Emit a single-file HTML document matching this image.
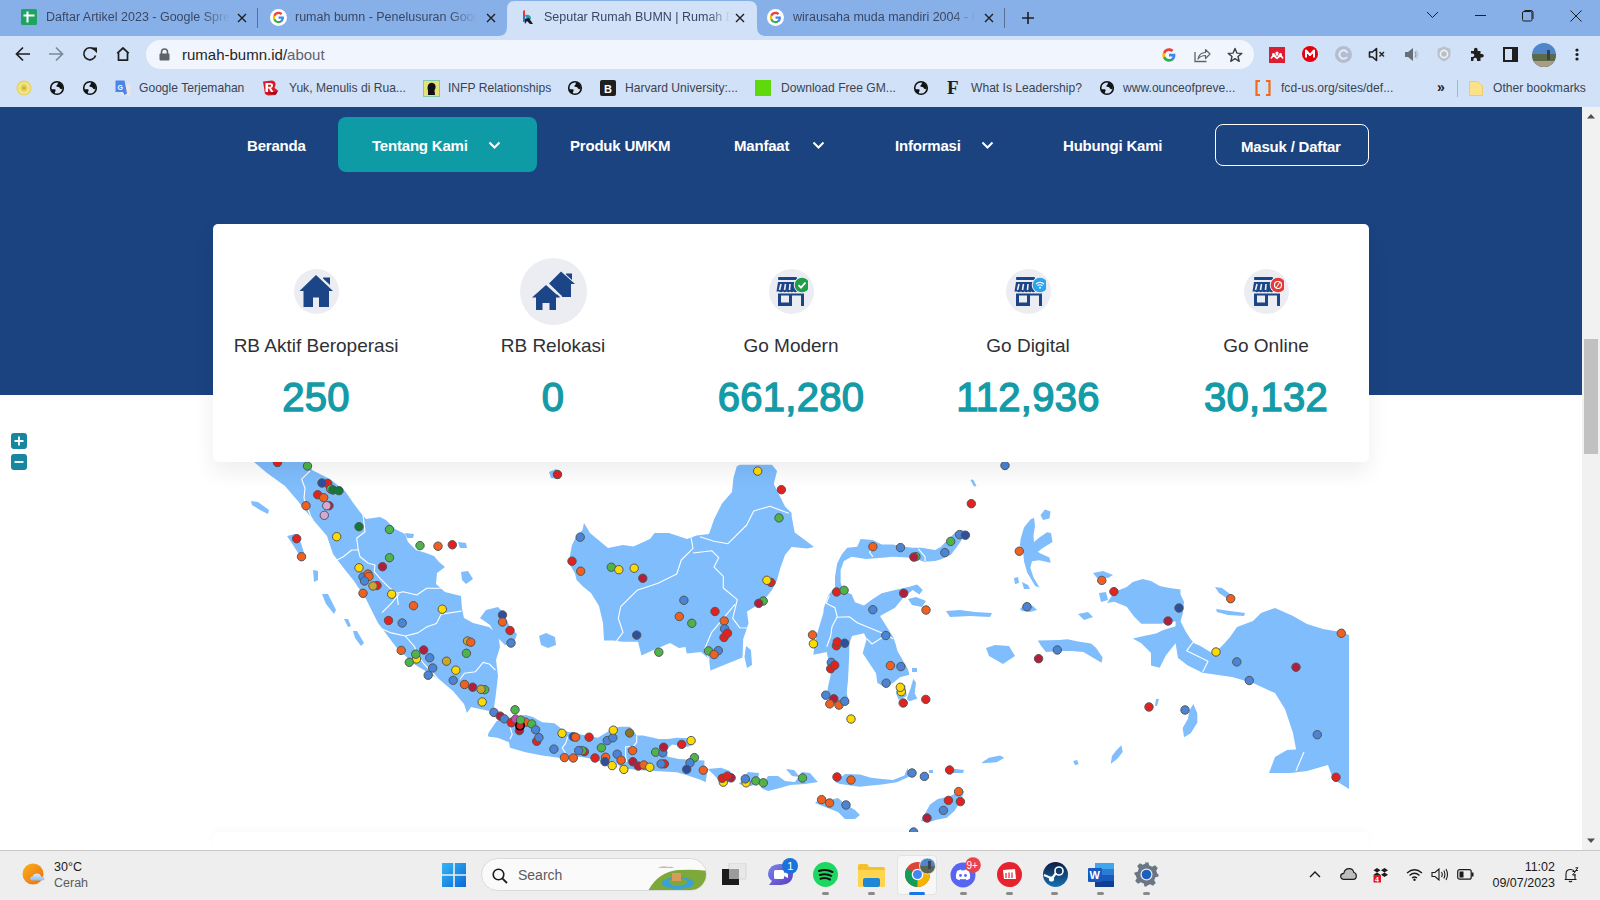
<!DOCTYPE html>
<html><head><meta charset="utf-8">
<style>
*{margin:0;padding:0;box-sizing:border-box}
html,body{width:1600px;height:900px;overflow:hidden;background:#fff;font-family:"Liberation Sans",sans-serif}
.a{position:absolute}
.tt{position:absolute;top:10px;font-size:12.5px;color:#3a4764;white-space:nowrap;overflow:hidden;line-height:15px}
.bm{position:absolute;top:81px;font-size:12.1px;color:#3c4350;white-space:nowrap;line-height:15px}
.nav{position:absolute;top:137px;color:#fff;font-weight:bold;font-size:15px;line-height:17px;white-space:nowrap;letter-spacing:-0.2px}
.lab{position:absolute;top:335px;width:240px;text-align:center;font-size:19px;color:#2e3136;line-height:22px}
.num{position:absolute;top:376px;width:260px;text-align:center;font-size:40px;font-weight:normal;color:#149ba7;-webkit-text-stroke:1.4px #149ba7;line-height:42px;letter-spacing:0.3px}
.ic{position:absolute;border-radius:50%;background:#ecedf3}
</style></head><body>
<!-- tab strip -->
<div class="a" style="left:0;top:0;width:1600px;height:36px;background:#88b0e8"></div>
<!-- active tab -->
<svg class="a" style="left:498px;top:0" width="268" height="36" viewBox="0 0 268 36">
<path d="M0 36 Q9 36 9 27 L9 9 Q9 1 17 1 L251 1 Q259 1 259 9 L259 27 Q259 36 268 36 Z" fill="#d0e1f8"/>
</svg>
<!-- tab 1 -->
<svg class="a" style="left:21px;top:9px" width="16" height="16" viewBox="0 0 16 16"><rect width="16" height="16" rx="1.5" fill="#1ea362"/><rect x="2.5" y="5.5" width="11" height="2" fill="#fff"/><rect x="5.5" y="2.5" width="2" height="11" fill="#fff"/></svg>
<div class="tt" style="left:46px;width:184px;-webkit-mask-image:linear-gradient(90deg,#000 85%,transparent)">Daftar Artikel 2023 - Google Spreadsheet</div>
<svg class="a" style="left:237px;top:13px" width="10" height="10" viewBox="0 0 10 10"><path d="M1 1L9 9M9 1L1 9" stroke="#1f1f1f" stroke-width="1.4"/></svg>
<div class="a" style="left:257px;top:8px;width:1px;height:20px;background:#5b6f8f"></div>
<!-- tab 2 -->
<svg class="a" style="left:270px;top:9px" width="17" height="17" viewBox="0 0 24 24"><circle cx="12" cy="12" r="12" fill="#fff"/><path d="M19.6 12.2c0-.6-.1-1.1-.2-1.6H12v3h4.3c-.2 1-.8 1.8-1.6 2.4v2h2.6c1.5-1.4 2.3-3.4 2.3-5.8z" fill="#4285f4"/><path d="M12 20c2.2 0 4-.7 5.3-1.9l-2.6-2c-.7.5-1.6.8-2.7.8-2.1 0-3.8-1.4-4.5-3.3H4.9v2.1C6.2 18.2 8.9 20 12 20z" fill="#34a853"/><path d="M7.5 13.6c-.2-.5-.3-1-.3-1.6s.1-1.1.3-1.6V8.3H4.9C4.3 9.4 4 10.7 4 12s.3 2.6.9 3.7l2.6-2.1z" fill="#fbbc05"/><path d="M12 7.1c1.2 0 2.3.4 3.1 1.2l2.3-2.3C16 4.8 14.2 4 12 4 8.9 4 6.2 5.8 4.9 8.3l2.6 2.1c.7-1.9 2.4-3.3 4.5-3.3z" fill="#ea4335"/></svg>
<div class="tt" style="left:295px;width:182px;-webkit-mask-image:linear-gradient(90deg,#000 85%,transparent)">rumah bumn - Penelusuran Google</div>
<svg class="a" style="left:486px;top:13px" width="10" height="10" viewBox="0 0 10 10"><path d="M1 1L9 9M9 1L1 9" stroke="#1f1f1f" stroke-width="1.4"/></svg>
<!-- tab 3 active -->
<svg class="a" style="left:521px;top:10px" width="13" height="15" viewBox="0 0 13 15"><path d="M2 1 L4 0 L4 10 L2 12Z" fill="#e53935"/><path d="M4 5 Q10 4 10 9 L6 10 Z" fill="#1ba3b0"/><path d="M3 9 L8 8 L12 14 L9 14 L6 11 L4 14Z" fill="#1b1b1b"/><path d="M2 8 L4 6 L4 11 L2 12Z" fill="#2a6fd6"/></svg>
<div class="tt" style="left:544px;width:186px;color:#3a4764;-webkit-mask-image:linear-gradient(90deg,#000 88%,transparent)">Seputar Rumah BUMN | Rumah BUMN</div>
<svg class="a" style="left:735px;top:13px" width="10" height="10" viewBox="0 0 10 10"><path d="M1 1L9 9M9 1L1 9" stroke="#1f1f1f" stroke-width="1.4"/></svg>
<!-- tab 4 -->
<svg class="a" style="left:767px;top:9px" width="17" height="17" viewBox="0 0 24 24"><circle cx="12" cy="12" r="12" fill="#fff"/><path d="M19.6 12.2c0-.6-.1-1.1-.2-1.6H12v3h4.3c-.2 1-.8 1.8-1.6 2.4v2h2.6c1.5-1.4 2.3-3.4 2.3-5.8z" fill="#4285f4"/><path d="M12 20c2.2 0 4-.7 5.3-1.9l-2.6-2c-.7.5-1.6.8-2.7.8-2.1 0-3.800-1.4-4.5-3.3H4.9v2.1C6.2 18.2 8.9 20 12 20z" fill="#34a853"/><path d="M7.5 13.6c-.2-.5-.3-1-.3-1.6s.1-1.1.3-1.6V8.3H4.9C4.3 9.4 4 10.7 4 12s.3 2.6.9 3.7l2.6-2.1z" fill="#fbbc05"/><path d="M12 7.1c1.2 0 2.3.4 3.1 1.2l2.3-2.3C16 4.8 14.2 4 12 4 8.9 4 6.2 5.8 4.9 8.3l2.6 2.1c.7-1.9 2.4-3.3 4.5-3.3z" fill="#ea4335"/></svg>
<div class="tt" style="left:793px;width:182px;-webkit-mask-image:linear-gradient(90deg,#000 88%,transparent)">wirausaha muda mandiri 2004 - Penelusuran</div>
<svg class="a" style="left:984px;top:13px" width="10" height="10" viewBox="0 0 10 10"><path d="M1 1L9 9M9 1L1 9" stroke="#1f1f1f" stroke-width="1.4"/></svg>
<div class="a" style="left:1004px;top:8px;width:1px;height:20px;background:#5b6f8f"></div>
<svg class="a" style="left:1021px;top:11px" width="14" height="14" viewBox="0 0 14 14"><path d="M7 1V13M1 7H13" stroke="#1f1f1f" stroke-width="1.6"/></svg>
<!-- window controls -->
<svg class="a" style="left:1426px;top:11px" width="13" height="8" viewBox="0 0 13 8"><path d="M1 1L6.5 6.5L12 1" stroke="#1f1f1f" stroke-width="1" fill="none"/></svg>
<div class="a" style="left:1475px;top:15px;width:11px;height:1px;background:#1f1f1f"></div>
<svg class="a" style="left:1521px;top:9px" width="13" height="13" viewBox="0 0 13 13"><rect x="1.5" y="2.5" width="9.5" height="9.5" rx="1.5" stroke="#1f1f1f" fill="none"/><path d="M3.5 1.5H10Q12 1.5 12 3.5V10" stroke="#1f1f1f" fill="none"/></svg>
<svg class="a" style="left:1570px;top:10px" width="12" height="12" viewBox="0 0 12 12"><path d="M0.5 0.5L11.5 11.5M11.5 0.5L0.5 11.5" stroke="#1f1f1f" stroke-width="1"/></svg>

<!-- toolbar -->
<div class="a" style="left:0;top:36px;width:1600px;height:71px;background:#d0e1f8"></div>
<svg class="a" style="left:15px;top:46px" width="16" height="16" viewBox="0 0 16 16"><path d="M15 8H2M8 1.5L1.5 8L8 14.5" stroke="#1f1f1f" stroke-width="1.7" fill="none"/></svg>
<svg class="a" style="left:48px;top:46px" width="16" height="16" viewBox="0 0 16 16"><path d="M1 8H14M8 1.5L14.5 8L8 14.5" stroke="#7d8796" stroke-width="1.7" fill="none"/></svg>
<svg class="a" style="left:82px;top:46px" width="16" height="16" viewBox="0 0 16 16"><path d="M13.6 9.5A6 6 0 1 1 12.2 3.6" stroke="#1f1f1f" stroke-width="1.7" fill="none"/><path d="M9.2 1.5H15V7.3Z" fill="#1f1f1f"/></svg>
<svg class="a" style="left:115px;top:46px" width="16" height="16" viewBox="0 0 16 16"><path d="M2.2 7.3L8 2L13.8 7.3M3.5 6.5V14.2H12.5V6.5" stroke="#1f1f1f" stroke-width="1.7" fill="none" stroke-linejoin="round"/></svg>
<div class="a" style="left:146px;top:40px;width:1108px;height:29px;border-radius:15px;background:#f1f5fd"></div>
<svg class="a" style="left:159px;top:48px" width="11" height="13" viewBox="0 0 11 13"><path d="M2.5 6V4A3 3 0 0 1 8.5 4V6" stroke="#5f6368" stroke-width="1.6" fill="none"/><rect x="0.5" y="5.5" width="10" height="7" rx="1" fill="#5f6368"/></svg>
<div class="a" style="left:182px;top:46px;font-size:15px;line-height:17px;color:#1f1f1f;white-space:nowrap">rumah-bumn.id/<span style="color:#5e6470">about</span></div>
<svg class="a" style="left:1162px;top:48px" width="14" height="14" viewBox="0 0 24 24"><path d="M23 12.3c0-.8-.1-1.6-.2-2.3H12v4.4h6.2c-.3 1.4-1.1 2.6-2.3 3.4v2.8h3.7C21.7 18.6 23 15.7 23 12.3z" fill="#4285f4"/><path d="M12 23.5c3.1 0 5.7-1 7.6-2.8l-3.7-2.8c-1 .7-2.3 1.1-3.9 1.1-3 0-5.5-2-6.4-4.7H1.8v2.9C3.7 21 7.6 23.5 12 23.5z" fill="#34a853"/><path d="M5.6 14.3c-.2-.7-.4-1.5-.4-2.3s.1-1.6.4-2.3V6.8H1.8C1 8.4.5 10.2.5 12s.5 3.6 1.3 5.2l3.8-2.9z" fill="#fbbc05"/><path d="M12 5c1.7 0 3.2.6 4.4 1.7l3.3-3.3C17.7 1.5 15.1.5 12 .5 7.6.5 3.7 3 1.8 6.8l3.8 2.9C6.5 7 9 5 12 5z" fill="#ea4335"/></svg>
<svg class="a" style="left:1194px;top:47px" width="17" height="16" viewBox="0 0 17 16"><path d="M1 5V14.5H12.5" stroke="#5f6368" stroke-width="1.3" fill="none"/><path d="M4 12C5 7 8 5.5 11.5 5.5V2.5L16 7L11.5 11.5V8.5C8.5 8.5 6 9.5 4 12Z" stroke="#5f6368" stroke-width="1.2" fill="none" stroke-linejoin="round"/></svg>
<svg class="a" style="left:1227px;top:47px" width="16" height="16" viewBox="0 0 16 16"><path d="M8 1.5L9.9 6.1L14.8 6.4L11 9.5L12.2 14.3L8 11.6L3.8 14.3L5 9.5L1.2 6.4L6.1 6.1Z" stroke="#3c4043" stroke-width="1.4" fill="none" stroke-linejoin="round"/></svg>
<!-- extensions -->
<svg class="a" style="left:1269px;top:47px" width="16" height="16" viewBox="0 0 16 16"><rect width="16" height="16" fill="#dc1e33"/><circle cx="8" cy="6" r="1.6" fill="#fff"/><circle cx="4.5" cy="7.5" r="1.4" fill="#fff"/><circle cx="11.5" cy="7.5" r="1.4" fill="#fff"/><path d="M2 11.5L4.5 8L8 11.5L11.5 8L14 11.5" stroke="#fff" stroke-width="1.5" fill="none"/><path d="M8 6L6 11M8 6L10 11" stroke="#fff" stroke-width="1.2"/></svg>
<svg class="a" style="left:1302px;top:46px" width="16" height="16" viewBox="0 0 16 16"><circle cx="8" cy="8" r="8" fill="#e4000f"/><path d="M4 11.5V4.5L8 9L12 4.5V11.5" stroke="#fff" stroke-width="2" fill="none" stroke-linejoin="round"/></svg>
<svg class="a" style="left:1335px;top:46px" width="17" height="17" viewBox="0 0 17 17"><circle cx="8.5" cy="8.5" r="8.5" fill="#b3bdd2"/><path d="M12.5 7A4.2 4.2 0 1 0 12 11" stroke="#e7ebf3" stroke-width="2" fill="none"/></svg>
<svg class="a" style="left:1368px;top:47px" width="18" height="15" viewBox="0 0 18 15"><path d="M1.5 5H4.5L8.5 1.5V13.5L4.5 10H1.5Z" stroke="#1f1f1f" stroke-width="1.6" fill="none" stroke-linejoin="round"/><path d="M11.5 5L16 9.5M16 5L11.5 9.5" stroke="#1f1f1f" stroke-width="1.4"/></svg>
<svg class="a" style="left:1404px;top:47px" width="15" height="15" viewBox="0 0 15 15"><path d="M1 5H4L9 1V14L4 10H1Z" fill="#676e78"/><path d="M11 4.5Q13 7.5 11 10.5" stroke="#9aa1ab" stroke-width="1.2" fill="none"/><path d="M12.5 3Q15.5 7.5 12.5 12" stroke="#b9bec6" stroke-width="1" fill="none"/></svg>
<svg class="a" style="left:1437px;top:46px" width="14" height="16" viewBox="0 0 14 16"><path d="M7 0.5L13.5 3V8Q13.5 13 7 15.5Q0.5 13 0.5 8V3Z" fill="#b9c0cb"/><circle cx="7" cy="8" r="3.6" stroke="#eef1f5" stroke-width="1.6" fill="none"/></svg>
<svg class="a" style="left:1469px;top:46px" width="16" height="16" viewBox="0 0 16 16"><path d="M2 5H5V3.5A1.8 1.8 0 0 1 8.6 3.5V5H11.5V8H13A1.8 1.8 0 0 1 13 11.6H11.5V15H8V13.5A1.8 1.8 0 0 0 4.4 13.5V15H2V11H3.5A1.8 1.8 0 0 0 3.5 7.4H2Z" fill="#1f1f1f"/></svg>
<svg class="a" style="left:1503px;top:47px" width="15" height="15" viewBox="0 0 15 15"><rect x="1" y="1" width="13" height="13" stroke="#1f1f1f" stroke-width="2" fill="none"/><rect x="9" y="1" width="5" height="13" fill="#1f1f1f"/></svg>
<svg class="a" style="left:1532px;top:43px" width="24" height="24" viewBox="0 0 24 24"><defs><clipPath id="av"><circle cx="12" cy="12" r="12"/></clipPath></defs><g clip-path="url(#av)"><rect width="24" height="24" fill="#4f86c9"/><rect y="11" width="24" height="13" fill="#5d6a4a"/><rect y="18" width="24" height="6" fill="#a89e86"/><rect x="15" y="7" width="3" height="10" fill="#3b4050"/></g></svg>
<svg class="a" style="left:1575px;top:48px" width="4" height="13" viewBox="0 0 4 13"><circle cx="2" cy="2" r="1.6" fill="#1f1f1f"/><circle cx="2" cy="6.5" r="1.6" fill="#1f1f1f"/><circle cx="2" cy="11" r="1.6" fill="#1f1f1f"/></svg>

<!-- bookmarks -->
<svg class="a" style="left:16px;top:80px" width="16" height="16" viewBox="0 0 16 16"><circle cx="8" cy="8" r="7.6" fill="#e8d660"/><circle cx="8" cy="8" r="5" fill="none" stroke="#f5ecb0" stroke-width="1.2"/><circle cx="8" cy="8" r="2" fill="#cdb640"/></svg>
<svg class="a" style="left:49px;top:80px" width="16" height="16" viewBox="0 0 16 16"><circle cx="8" cy="8" r="6.3" fill="#d0e1f8" stroke="#111" stroke-width="1.6"/><path d="M9 2.2Q12.5 3 13.8 6.5L13.5 9Q12 9.5 11 8.5Q10.5 7 9.5 7Q8 7 7.2 6.3Q7.5 5 8.6 4.6Z" fill="#111"/><path d="M1.8 9.3H5.8Q6.9 9.6 6.6 10.8Q5.8 11.5 5.7 14Q2.5 12.5 1.8 9.3Z" fill="#111"/></svg>
<svg class="a" style="left:82px;top:80px" width="16" height="16" viewBox="0 0 16 16"><circle cx="8" cy="8" r="6.3" fill="#d0e1f8" stroke="#111" stroke-width="1.6"/><path d="M9 2.2Q12.5 3 13.8 6.5L13.5 9Q12 9.5 11 8.5Q10.5 7 9.5 7Q8 7 7.2 6.3Q7.5 5 8.6 4.6Z" fill="#111"/><path d="M1.8 9.3H5.8Q6.9 9.6 6.6 10.8Q5.8 11.5 5.7 14Q2.5 12.5 1.8 9.3Z" fill="#111"/></svg>
<svg class="a" style="left:115px;top:80px" width="16" height="16" viewBox="0 0 16 16"><rect x="6" y="4" width="9.5" height="11.5" fill="#e6e6e6"/><path d="M0.5 0.5H9.5L12 13.5L9.5 15L8 12H0.5Z" fill="#4a86e8"/><text x="2.4" y="9.5" font-size="7" font-weight="bold" fill="#fff" font-family="Liberation Sans">G</text></svg>
<div class="bm" style="left:139px">Google Terjemahan</div>
<svg class="a" style="left:262px;top:80px" width="17" height="16" viewBox="0 0 17 16"><path d="M1 1.5L10 0.5Q14 1 13.5 5L12.5 8L16 10.5L13.5 15L6 15.5L3 14Z" fill="#d81b28"/><path d="M4 13L14 14.5L16 10.5L13 12Z" fill="#8c0d16"/><path d="M3.5 3H8.5Q11 3 11 5.5Q11 7.5 9 8L11.5 12H9L7 8.5H6V12H3.5Z M6 4.8V6.8H8.3Q9 6.8 9 5.8Q9 4.8 8.3 4.8Z" fill="#fff" fill-rule="evenodd"/></svg>
<div class="bm" style="left:289px">Yuk, Menulis di Rua...</div>
<svg class="a" style="left:423px;top:80px" width="17" height="17" viewBox="0 0 17 17"><rect width="17" height="17" fill="#7fc8a8"/><rect x="1" y="1" width="15" height="15" fill="#e5e07a"/><path d="M5 15V11Q4 8 5 5Q7 2 10 3Q13 4 12.5 8Q12 9.5 11.5 10L12 15Z" fill="#111"/></svg>
<div class="bm" style="left:448px">INFP Relationships</div>
<svg class="a" style="left:567px;top:80px" width="16" height="16" viewBox="0 0 16 16"><circle cx="8" cy="8" r="6.3" fill="#d0e1f8" stroke="#111" stroke-width="1.6"/><path d="M9 2.2Q12.5 3 13.8 6.5L13.5 9Q12 9.5 11 8.5Q10.5 7 9.5 7Q8 7 7.2 6.3Q7.5 5 8.6 4.6Z" fill="#111"/><path d="M1.8 9.3H5.8Q6.9 9.6 6.6 10.8Q5.8 11.5 5.7 14Q2.5 12.5 1.8 9.3Z" fill="#111"/></svg>
<svg class="a" style="left:600px;top:80px" width="16" height="16" viewBox="0 0 16 16"><rect width="16" height="16" rx="2" fill="#1f1f1f"/><text x="4" y="12.5" font-size="11" font-weight="bold" fill="#fff" font-family="Liberation Sans">B</text></svg>
<div class="bm" style="left:625px">Harvard University:...</div>
<div class="a" style="left:755px;top:80px;width:16px;height:16px;background:#5fd80c"></div>
<div class="bm" style="left:781px">Download Free GM...</div>
<svg class="a" style="left:913px;top:80px" width="16" height="16" viewBox="0 0 16 16"><circle cx="8" cy="8" r="6.3" fill="#d0e1f8" stroke="#111" stroke-width="1.6"/><path d="M9 2.2Q12.5 3 13.8 6.5L13.5 9Q12 9.5 11 8.5Q10.5 7 9.5 7Q8 7 7.2 6.3Q7.5 5 8.6 4.6Z" fill="#111"/><path d="M1.8 9.3H5.8Q6.9 9.6 6.6 10.8Q5.8 11.5 5.7 14Q2.5 12.5 1.8 9.3Z" fill="#111"/></svg>
<div class="a" style="left:947px;top:78px;font-family:'Liberation Serif',serif;font-weight:bold;font-size:19px;line-height:20px;color:#1f1f1f">F</div>
<div class="bm" style="left:971px">What Is Leadership?</div>
<svg class="a" style="left:1099px;top:80px" width="16" height="16" viewBox="0 0 16 16"><circle cx="8" cy="8" r="6.3" fill="#d0e1f8" stroke="#111" stroke-width="1.6"/><path d="M9 2.2Q12.5 3 13.8 6.5L13.5 9Q12 9.5 11 8.5Q10.5 7 9.5 7Q8 7 7.2 6.3Q7.5 5 8.6 4.6Z" fill="#111"/><path d="M1.8 9.3H5.8Q6.9 9.6 6.6 10.8Q5.8 11.5 5.7 14Q2.5 12.5 1.8 9.3Z" fill="#111"/></svg>
<div class="bm" style="left:1123px">www.ounceofpreve...</div>
<svg class="a" style="left:1255px;top:80px" width="16" height="16" viewBox="0 0 16 16"><path d="M5 1H1.5V15H5M11 1H14.5V15H11" stroke="#f26b1d" stroke-width="2.2" fill="none"/></svg>
<div class="bm" style="left:1281px">fcd-us.org/sites/def...</div>
<div class="a" style="left:1437px;top:79px;font-size:14px;font-weight:bold;line-height:16px;color:#1f1f1f">&raquo;</div>
<div class="a" style="left:1457px;top:80px;width:1px;height:17px;background:#a9b6c9"></div>
<svg class="a" style="left:1469px;top:81px" width="14" height="15" viewBox="0 0 14 15"><path d="M0.5 0.5H8.5L13.5 5V14.5H0.5Z" fill="#fbe28a" stroke="#e8c95a" stroke-width="0.8"/></svg>
<div class="bm" style="left:1493px">Other bookmarks</div>

<!-- page -->
<div class="a" style="left:0;top:107px;width:1582px;height:743px;background:#fff"></div>
<div class="a" style="left:0;top:107px;width:1582px;height:288px;background:#1a4380"></div>
<div class="nav" style="left:247px">Beranda</div>
<div class="a" style="left:338px;top:117px;width:199px;height:55px;border-radius:8px;background:#0e9ba6"></div>
<div class="nav" style="left:372px">Tentang Kami</div>
<svg class="a" style="left:488px;top:141px" width="13" height="9" viewBox="0 0 13 9"><path d="M1.5 1.5L6.5 6.5L11.5 1.5" stroke="#fff" stroke-width="2" fill="none"/></svg>
<div class="nav" style="left:570px">Produk UMKM</div>
<div class="nav" style="left:734px">Manfaat</div>
<svg class="a" style="left:812px;top:141px" width="13" height="9" viewBox="0 0 13 9"><path d="M1.5 1.5L6.5 6.5L11.5 1.5" stroke="#fff" stroke-width="2" fill="none"/></svg>
<div class="nav" style="left:895px">Informasi</div>
<svg class="a" style="left:981px;top:141px" width="13" height="9" viewBox="0 0 13 9"><path d="M1.5 1.5L6.5 6.5L11.5 1.5" stroke="#fff" stroke-width="2" fill="none"/></svg>
<div class="nav" style="left:1063px">Hubungi Kami</div>
<div class="a" style="left:1215px;top:124px;width:154px;height:42px;border-radius:8px;border:1.3px solid #fff"></div>
<div class="nav" style="left:1241px;top:138px">Masuk / Daftar</div>

<svg class="a" style="left:0;top:0" width="1600" height="900" viewBox="0 0 1600 900"><defs><clipPath id="mc"><rect x="0" y="107" width="1582" height="726"/></clipPath></defs><g clip-path="url(#mc)"><g fill="#7fbdfc"><polygon points="254,462 267,473 285,486 297,500 309,515 327,536 333,554 342,566 354,581 366,599 378,623 396,647 414,664 422,669 440,680 453,691 464,704 467,713 471,707 480,709 489,711 494,708 496,693 498,676 496,660 500,647 498,633 495,632 489,627 473,623 464,618 462,609 461,596 445,592 436,584 437,573 445,567 439,562 434,556 426,553 416,550 408,542 405,534 395,529 386,520 380,517 366,519 360,512 354,504 345,491 330,479 312,470 309,462"/><polygon points="480,618 486,610 498,607 503,612 510,627 517,634 514,643 505,645 496,636 490,625"/><polygon points="539,636 546,633 555,637 556,645 548,648 541,645"/><polygon points="251,501 258,502 269,510 268,514 260,510 252,505"/><polygon points="287,536 295,534 301,543 304,553 300,556 293,545"/><polygon points="313,570 318,571 318,580 314,582"/><polygon points="322,594 328,594 336,610 334,614 326,604"/><polygon points="344,619 348,619 351,626 348,627"/><polygon points="353,631 357,631 364,643 361,646 355,638"/><polygon points="405,533 414,534 413,538 407,538"/><polygon points="458,542 466,543 467,548 460,548"/><polygon points="461,572 468,571 473,579 466,584 462,580"/><polygon points="549,472 556,469 562,474 558,479 551,478"/><polygon points="487.8,735.6 488.9,732.2 496.7,721.1 507.8,717.8 525.6,715 532.2,716.7 542.2,722.2 554.4,723.3 564.4,731.1 581.1,734.4 597.8,737.8 614.4,727.8 621,726.7 630,726.7 636.7,735.6 643,735.6 659,739 668,739 676.7,737.8 687.8,738.3 694.4,738.9 692,745 687.8,746.7 672.2,744.4 665.6,750 667.8,756.7 679,759 694.4,760 704.4,760.6 704.4,766.7 707.8,768.9 705.6,782.2 701,780 687.8,775.6 676.7,772.2 654.4,771 637.8,770 621,767.8 614.4,761.1 603.3,762.2 592.2,758.9 581.1,756.7 558.9,757.8 542.2,755.6 525.6,752.2 510,747.8 508.9,742.2 497.8,737.8 488.9,736.7"/><polygon points="707.8,768.9 721,767.8 730,771 734.4,776.7 732.2,782.2 721,782.2 710,771"/><polygon points="739,784 748,772 759,773 758,780 752,786 743,785"/><polygon points="761,788 768,776 778,776 785,781 795,782 802,772 810,773 816,780 818,782 805,784 790,785 780,788 768,791"/><polygon points="835,782 845,774 860,774.4 871,777.8 882,779 893,780 904.4,775.6 907.8,767.8 909,776.7 896.7,782.2 882,784.4 871,785.6 860,786.7 840,784"/><polygon points="929,770 933,770 933,773 929,773"/><polygon points="946.7,770 955,769 964,770 963,773 947,773"/><polygon points="815,803 820,798 830,800 838,798 845,804 855,810 860,815 855,819 845,819 838,812 825,807"/><polygon points="921,821 930,804.4 937.8,798.9 948.9,796.7 957.8,792.2 964.4,791 960,802.2 954.4,811 946.7,817.8 935.6,820 928.9,822.2"/><polygon points="982.2,762.2 988.9,757.8 1000,755.6 1004.4,757.8 996.7,762.2 982.2,763.3"/><polygon points="584,523 590,533 599,540.5 608,548 623,545 633.5,546.5 650,539 654.5,533 669,533 687,539 696.5,535.6 709,534 714,519.5 722,503.4 732,492 733.5,477.6 736.8,466.3 740,464.7 772,464.7 777,471 773.8,484 778.7,493.7 785,506.6 791.6,513 791.6,516.3 794.7,532.4 807.6,542 814,547 807.6,548.5 791.6,547 785,555 780.3,568 777,580 772,590 766,597.5 756,606 747,611.5 748.5,623.3 745,634 743.2,639 742.5,657.5 710.4,670.5 709,659 701,652 686.8,653.5 685.5,647 679,648 670,643 651.4,651 641.5,655.5 638,641.7 622.5,641.7 613.3,640.4 604,640.4 603,623 599,606 591,593 583,586.6 576.6,580 575,573.5 569,563 570.5,552.5 572,545 576.5,536 582.5,530"/><polygon points="966.5,531.2 963,538 957.5,546 950.7,555 940.6,559.4 935,561 923.9,561.7 912.8,557.8 892.8,556.7 881.7,557.8 866,558.9 851.7,556.7 843.9,561 840.6,570 840.6,582.2 842.8,590 851.7,594.4 855,602.2 863.9,605.6 872.8,598.9 881.7,593.3 895,590 909.4,586.7 917.2,584.4 922.8,590 919.4,594.4 912.8,590 903.9,596.7 895,607.8 880,616 886.7,626.7 893.3,637.3 896,645.3 897.3,650.7 908,669.3 909.3,674.7 900,677.3 893.3,682.7 884,686.7 877.3,682.7 876,673.3 862.7,653.3 866.7,638.7 864,633.3 852,636 849.3,644 849.3,653.3 848,680 846.7,693.3 849.3,704 840,705.3 832,704 826.7,696 828,686.7 830.7,674.7 829.3,664 826.7,652 813.3,654.7 814.7,644 817.3,633.3 820,624 823.3,613.3 823.9,607.8 828.3,595.6 835,586.7 835,576.7 837.2,563.3 841.7,554.4 847.2,547.8 857.2,546.7 860.6,538.9 872.8,540 881.7,544.4 892.8,544.4 903.9,546.7 912.8,547.8 921.7,547.8 935,550 940.6,547 948.5,539 955.2,532.4 961,530"/><polygon points="913.3,678.7 916,682.7 914.7,693.3 917.3,698.7 909.3,701.3 906.7,698.7 910.7,688"/><polygon points="908,599 916,597 926,601 922,607 912,605"/><polygon points="946,611 960,610 975,612 992,613 990,617 970,616 950,617"/><polygon points="986,648 995,645 1009,646 1015,656 1003,664 989,656"/><polygon points="1037.8,640.4 1059,640 1067.5,639.3 1078,641.4 1091,643.6 1096,647.8 1102.6,657.4 1101.5,662.7 1083.4,652 1070.7,651 1060,651 1046,652 1041,645.7"/><polygon points="1034,517.8 1035,526 1033.5,535.6 1034,542 1039,537.8 1047,532.2 1051,533 1052.5,542 1043.2,547.8 1037.7,551.7 1040,553.3 1049.4,557.6 1050.7,562.7 1039,560.2 1032,561.3 1030.3,567.8 1033.5,577.5 1039.5,587.5 1035.2,586 1027.2,572.6 1024,561.3 1023.1,551.7 1019.9,545.2 1020.7,538.8 1024,527.5 1030.4,519.5"/><polygon points="1045,509.5 1050.5,511.5 1049.5,518.5 1043,520 1040.5,515"/><polygon points="1014,578 1018,577 1019,583 1015,584"/><polygon points="1022,582 1028,585 1030,589 1024,589"/><polygon points="970.5,480 973,479.5 976.5,486 974,486.5"/><polygon points="1093,573 1103,571 1113,575 1108,578 1097,578"/><polygon points="1099,593 1106,592 1108,600 1101,602"/><polygon points="1078,614 1088,612 1093,617 1084,620"/><polygon points="1107,603 1114.4,592 1126.7,587 1132.8,582 1142.6,579 1151,581 1159.7,586 1169.5,588 1180.5,589.6 1180.5,594.4 1184,601.8 1183,612.8 1180.5,621.3 1185.4,631 1190.2,638.5 1194,643.3 1200,645.8 1212,653 1219.6,648.2 1224.5,643.3 1230,637 1237,627 1253,621 1261,613 1275,608 1293,616 1307,624 1323,629 1341,632 1349,635 1349,789 1333,779 1328,765 1307,771 1290,773 1296,749 1293,733 1285,709 1275,693 1253,683 1232,677 1202.5,672.7 1187.8,665.4 1178,658 1175.6,643.3 1165.8,655.6 1159.7,667.8 1151,665.4 1151,653 1141.3,643.3 1132.8,638.5 1143.8,636 1156,633.6 1163.3,630 1175.6,626.2 1175.6,621.3 1161,623.8 1141.3,623.8 1134,616.5 1126.7,606.7 1114.4,601.8"/><polygon points="1269,773 1275,757 1287,750 1304,749 1300,765 1290,773"/><polygon points="1216,609 1230,611 1245,613 1244,616 1228,615 1217,612"/><polygon points="1215,587 1222,588 1230,594 1235,600 1228,599 1219,593"/><polygon points="1193.3,704 1197.3,713.3 1197.3,722.7 1190.7,733.3 1184,737.3 1182.7,728 1188,718.7 1189.3,710.7"/><polygon points="1156,699 1159,699 1157,706 1155,706"/><polygon points="1121.3,745.3 1122.7,752 1117.3,758.7 1110.7,764 1112,756 1116,750.7"/><polygon points="1073.3,761 1077,760 1078.7,764 1075,765.3"/><polygon points="898.7,682.7 905.3,685.3 906.7,696 898.7,700 896,693.3"/><polygon points="746,646 751,650 752,665 747,668 744.5,657"/><polygon points="786,769 794,770 800,777 792,776"/><polygon points="912,668 917,668 917,672 912,672"/><polygon points="1020,609 1024,605 1033,606 1037,610 1030,612 1022,611"/></g><g fill="none" stroke="#fff" stroke-width="1.1" stroke-linejoin="round"><polyline points="310,470.8 301.7,479.2 305,488.3 304,498.3 308.3,510 310.8,516.7 313,520"/><polyline points="361.7,508.3 363.3,516.7 365,531.7 356.7,538.3 358.3,550 360,556.7 368.3,563.3 375,565 374.2,571.7 380,578.3 390,588.3 396.7,593.3 398.3,605"/><polyline points="333,562 343.3,556.7 351.7,550 358.3,550"/><polyline points="396.7,593.3 403.3,591.7 416.7,595 426.7,588.3 438.3,588.3 461,588"/><polyline points="382,612.7 391.3,603.3 399.1,594"/><polyline points="380.4,628.2 391.3,632.9 405.3,636 417.8,632.9 427.1,626.7 436.4,623.5 441.1,614.2 461.3,611.1"/><polyline points="405.3,636 414.7,646.9 416.2,653 424,664 433.3,673.3 441.1,682.6 447.3,688.9"/><polyline points="459.8,679.5 464.4,673.3 475.3,671.8 483.1,662.4 489.3,664 495.5,670.2"/><polyline points="690.7,535.5 693,548.3 681.3,560 676.7,574 658,583.3 637,590.3 620.7,606.7 618.3,618.3 623,632.3 616,641.7"/><polyline points="700,536.7 714,541.3 728,543.7 746.7,525 753.7,511 770,506.3 788.7,513.3"/><polyline points="693,553 711.7,550.7 718.7,557.7 714,567 723.3,576.3 723.3,588 737.3,599.7 732.7,618.3 739.7,627.7 748,628"/><polyline points="735,604.3 723.3,618.3 711.7,632.3 704.7,648.7 709.3,660.3"/><polyline points="918.3,548.9 925,556.7 925,561"/><polyline points="873.9,545.6 869.4,552.2 872.8,556.7"/><polyline points="829.4,595.6 826.1,603.3 835,607.8 837.2,616.7 832,626.7 830.7,636 826.7,646.7"/><polyline points="837.3,617.3 849.3,616.7 857.3,622.7 882.7,633.3 893.3,638.7"/><polyline points="866.7,638.7 872,644 882.7,637.3"/><polyline points="510,726.7 512.2,734.4 510,738.9"/><polyline points="567.8,736.7 565.6,743.3 562.2,747.8 565.6,753.3 565,757"/><polyline points="636.7,735.6 636.7,742.2 633.3,746.7 625.6,746.7 625.6,755.6 626.7,762.2"/><polyline points="1194.7,640 1186.7,650.7 1208,661.3 1202.7,672"/><polyline points="1304,752 1296,770.7"/></g><g stroke="#555" stroke-width="1"><circle cx="277.5" cy="462.5" r="4.2" fill="#e3211f"/><circle cx="307.5" cy="466" r="4.2" fill="#4cb448"/><circle cx="327.7" cy="483.5" r="4.2" fill="#e3211f"/><circle cx="322" cy="483" r="4.2" fill="#2e4f9c"/><circle cx="330.7" cy="489" r="4.2" fill="#4cb448"/><circle cx="333" cy="490" r="4.2" fill="#0f7a3a"/><circle cx="339" cy="490.7" r="4.2" fill="#0f7a3a"/><circle cx="317.7" cy="494.7" r="4.2" fill="#e3211f"/><circle cx="323.7" cy="497.7" r="4.2" fill="#f2601f"/><circle cx="306" cy="505.7" r="4.2" fill="#f2601f"/><circle cx="329" cy="505.7" r="4.2" fill="#b21f3c"/><circle cx="326.7" cy="505.7" r="4.2" fill="#d8a6d2"/><circle cx="324.3" cy="515.3" r="4.2" fill="#d8a6d2"/><circle cx="359" cy="526.7" r="4.2" fill="#0f7a3a"/><circle cx="389.5" cy="529.5" r="4.2" fill="#4cb448"/><circle cx="336.7" cy="536.7" r="4.2" fill="#fedb00"/><circle cx="296.7" cy="538.7" r="4.2" fill="#e3211f"/><circle cx="301.5" cy="556.7" r="4.2" fill="#f2601f"/><circle cx="389.5" cy="557.7" r="4.2" fill="#4cb448"/><circle cx="382.5" cy="566.7" r="4.2" fill="#b21f3c"/><circle cx="359" cy="567.8" r="4.2" fill="#fedb00"/><circle cx="363" cy="577" r="4.2" fill="#4a84d6"/><circle cx="368" cy="574" r="4.2" fill="#f2601f"/><circle cx="369" cy="576.5" r="4.2" fill="#f2601f"/><circle cx="364.5" cy="581" r="4.2" fill="#4a84d6"/><circle cx="377" cy="585.5" r="4.2" fill="#e3211f"/><circle cx="373" cy="586" r="4.2" fill="#c9a72c"/><circle cx="363" cy="593.3" r="4.2" fill="#f2601f"/><circle cx="391.7" cy="594.2" r="4.2" fill="#fedb00"/><circle cx="413.5" cy="605.7" r="4.2" fill="#f2601f"/><circle cx="442.3" cy="609.2" r="4.2" fill="#fedb00"/><circle cx="388.5" cy="620.5" r="4.2" fill="#e3211f"/><circle cx="402.2" cy="623" r="4.2" fill="#4a84d6"/><circle cx="467.5" cy="641" r="4.2" fill="#c9a72c"/><circle cx="470.8" cy="642.2" r="4.2" fill="#f2601f"/><circle cx="466.4" cy="653.3" r="4.2" fill="#4cb448"/><circle cx="401.2" cy="650.4" r="4.2" fill="#f2601f"/><circle cx="423.7" cy="650" r="4.2" fill="#b21f3c"/><circle cx="416.5" cy="659" r="4.2" fill="#fedb00"/><circle cx="415.7" cy="654.2" r="4.2" fill="#4cb448"/><circle cx="409.3" cy="662.3" r="4.2" fill="#4cb448"/><circle cx="429.7" cy="657.8" r="4.2" fill="#4a84d6"/><circle cx="446.5" cy="661.2" r="4.2" fill="#c9a72c"/><circle cx="432.7" cy="668" r="4.2" fill="#4a84d6"/><circle cx="428.2" cy="675.2" r="4.2" fill="#4a84d6"/><circle cx="455.8" cy="670.2" r="4.2" fill="#fedb00"/><circle cx="453.2" cy="680.3" r="4.2" fill="#4a84d6"/><circle cx="464.5" cy="684.5" r="4.2" fill="#f2601f"/><circle cx="472.7" cy="687.2" r="4.2" fill="#b21f3c"/><circle cx="484.7" cy="689.7" r="4.2" fill="#4cb448"/><circle cx="481" cy="689.3" r="4.2" fill="#c9a72c"/><circle cx="420" cy="545.6" r="4.2" fill="#4cb448"/><circle cx="438" cy="546.2" r="4.2" fill="#f2601f"/><circle cx="452.3" cy="544.8" r="4.2" fill="#e3211f"/><circle cx="502.5" cy="615" r="4.2" fill="#2e4f9c"/><circle cx="502.5" cy="622" r="4.2" fill="#f2601f"/><circle cx="510" cy="630.5" r="4.2" fill="#e3211f"/><circle cx="511" cy="643" r="4.2" fill="#4a84d6"/><circle cx="482.2" cy="702" r="4.2" fill="#fedb00"/><circle cx="493.9" cy="712.4" r="4.2" fill="#4a84d6"/><circle cx="500.2" cy="716.1" r="4.2" fill="#b21f3c"/><circle cx="504.4" cy="718.9" r="4.2" fill="#4a84d6"/><circle cx="515" cy="709.8" r="4.2" fill="#4cb448"/><circle cx="511.3" cy="722.8" r="4.2" fill="#e3211f"/><circle cx="525.6" cy="722.2" r="4.2" fill="#f2601f"/><circle cx="519.4" cy="730.6" r="4.2" fill="#b21f3c"/><circle cx="515.6" cy="719.1" r="4.2" fill="#c04fb0"/><circle cx="520" cy="725.6" r="4.2" fill="#e3211f" stroke="#000" stroke-width="1.6"/><circle cx="520.6" cy="720" r="4.2" fill="#4cb448"/><circle cx="531.7" cy="723.9" r="4.2" fill="#4cb448"/><circle cx="535.6" cy="729.8" r="4.2" fill="#4a84d6"/><circle cx="536.7" cy="741.3" r="4.2" fill="#e3211f"/><circle cx="538.9" cy="737.6" r="4.2" fill="#4a84d6"/><circle cx="562" cy="733.3" r="4.2" fill="#fedb00"/><circle cx="553.9" cy="749.1" r="4.2" fill="#4a84d6"/><circle cx="573.3" cy="736.7" r="4.2" fill="#2e4f9c"/><circle cx="575.6" cy="737.2" r="4.2" fill="#f2601f"/><circle cx="589.1" cy="737.2" r="4.2" fill="#e3211f"/><circle cx="564.4" cy="757.6" r="4.2" fill="#f2601f"/><circle cx="573.3" cy="758" r="4.2" fill="#f2601f"/><circle cx="584.4" cy="751.7" r="4.2" fill="#e3211f"/><circle cx="582.2" cy="750.6" r="4.2" fill="#4cb448"/><circle cx="578.7" cy="750.6" r="4.2" fill="#4a84d6"/><circle cx="601.4" cy="747.8" r="4.2" fill="#4cb448"/><circle cx="595" cy="758" r="4.2" fill="#e3211f"/><circle cx="605.6" cy="757.2" r="4.2" fill="#f2601f"/><circle cx="605" cy="761.7" r="4.2" fill="#2e4f9c"/><circle cx="612.2" cy="765.6" r="4.2" fill="#fedb00"/><circle cx="607.2" cy="740.6" r="4.2" fill="#4a84d6"/><circle cx="612.8" cy="737.8" r="4.2" fill="#4a84d6"/><circle cx="613.3" cy="730.2" r="4.2" fill="#fedb00"/><circle cx="617.2" cy="754.2" r="4.2" fill="#4a84d6"/><circle cx="621.1" cy="760.2" r="4.2" fill="#f2601f"/><circle cx="623.9" cy="769.4" r="4.2" fill="#fedb00"/><circle cx="629.6" cy="733" r="4.2" fill="#8d7420"/><circle cx="632.6" cy="750.6" r="4.2" fill="#f2601f"/><circle cx="632.8" cy="761.7" r="4.2" fill="#b21f3c"/><circle cx="638.3" cy="766.1" r="4.2" fill="#b21f3c"/><circle cx="643.9" cy="765" r="4.2" fill="#f2601f"/><circle cx="649.8" cy="767.2" r="4.2" fill="#fedb00"/><circle cx="655.6" cy="752.2" r="4.2" fill="#4cb448"/><circle cx="664.4" cy="763.9" r="4.2" fill="#e3211f"/><circle cx="661.1" cy="763.9" r="4.2" fill="#4a84d6"/><circle cx="662.8" cy="752.8" r="4.2" fill="#4a84d6"/><circle cx="663.6" cy="747.2" r="4.2" fill="#b21f3c"/><circle cx="681.7" cy="744.4" r="4.2" fill="#e3211f"/><circle cx="691.1" cy="740.6" r="4.2" fill="#fedb00"/><circle cx="694.4" cy="757.6" r="4.2" fill="#4cb448"/><circle cx="690" cy="762.8" r="4.2" fill="#4a84d6"/><circle cx="686.7" cy="769.4" r="4.2" fill="#2e4f9c"/><circle cx="703.3" cy="770.2" r="4.2" fill="#f2601f"/><circle cx="723.3" cy="782.2" r="4.2" fill="#fedb00"/><circle cx="722.2" cy="778.3" r="4.2" fill="#e3211f"/><circle cx="731.1" cy="777.8" r="4.2" fill="#b21f3c"/><circle cx="727.2" cy="776.1" r="4.2" fill="#e3211f"/><circle cx="746.1" cy="782.8" r="4.2" fill="#fedb00"/><circle cx="745.3" cy="778.9" r="4.2" fill="#4a84d6"/><circle cx="755.8" cy="780.9" r="4.2" fill="#4cb448"/><circle cx="763.3" cy="782.8" r="4.2" fill="#4cb448"/><circle cx="557.5" cy="474.5" r="4.2" fill="#e3211f"/><circle cx="580.2" cy="537.2" r="4.2" fill="#4a84d6"/><circle cx="572" cy="561.2" r="4.2" fill="#e3211f"/><circle cx="580.7" cy="571.2" r="4.2" fill="#f2601f"/><circle cx="611.3" cy="567.2" r="4.2" fill="#4cb448"/><circle cx="618.8" cy="569.7" r="4.2" fill="#fedb00"/><circle cx="634.2" cy="568.2" r="4.2" fill="#fedb00"/><circle cx="642.8" cy="578.3" r="4.2" fill="#b21f3c"/><circle cx="757.7" cy="471.1" r="4.2" fill="#fedb00"/><circle cx="781.4" cy="489.7" r="4.2" fill="#e3211f"/><circle cx="779" cy="517.9" r="4.2" fill="#4cb448"/><circle cx="771" cy="582.4" r="4.2" fill="#e3211f"/><circle cx="766.9" cy="580.3" r="4.2" fill="#fedb00"/><circle cx="683.9" cy="600.3" r="4.2" fill="#4a84d6"/><circle cx="679.3" cy="616.5" r="4.2" fill="#f2601f"/><circle cx="691.8" cy="623.3" r="4.2" fill="#4cb448"/><circle cx="715" cy="611.5" r="4.2" fill="#e3211f"/><circle cx="724.2" cy="621" r="4.2" fill="#f2601f"/><circle cx="724.6" cy="628.8" r="4.2" fill="#4a84d6"/><circle cx="724" cy="637.5" r="4.2" fill="#e3211f"/><circle cx="727.5" cy="633.2" r="4.2" fill="#e3211f"/><circle cx="636.7" cy="635.1" r="4.2" fill="#2e4f9c"/><circle cx="658.8" cy="652.2" r="4.2" fill="#4cb448"/><circle cx="708.5" cy="650.9" r="4.2" fill="#4cb448"/><circle cx="718.3" cy="650.6" r="4.2" fill="#4a84d6"/><circle cx="714.1" cy="654.5" r="4.2" fill="#f2601f"/><circle cx="763.2" cy="601" r="4.2" fill="#4cb448"/><circle cx="758.7" cy="603.4" r="4.2" fill="#b21f3c"/><circle cx="851" cy="719" r="4.2" fill="#fedb00"/><circle cx="802.5" cy="778" r="4.2" fill="#4cb448"/><circle cx="821.6" cy="799.6" r="4.2" fill="#f2601f"/><circle cx="829.6" cy="803" r="4.2" fill="#f2601f"/><circle cx="846" cy="805" r="4.2" fill="#4a84d6"/><circle cx="837" cy="777" r="4.2" fill="#e3211f"/><circle cx="851" cy="780" r="4.2" fill="#f2601f"/><circle cx="912" cy="773" r="4.2" fill="#4a84d6"/><circle cx="924.4" cy="776.4" r="4.2" fill="#4a84d6"/><circle cx="949.6" cy="770" r="4.2" fill="#e3211f"/><circle cx="958.6" cy="791.6" r="4.2" fill="#f2601f"/><circle cx="948.4" cy="800.4" r="4.2" fill="#e3211f"/><circle cx="960.4" cy="801.6" r="4.2" fill="#e3211f"/><circle cx="943.4" cy="810.4" r="4.2" fill="#4a84d6"/><circle cx="927" cy="818" r="4.2" fill="#b21f3c"/><circle cx="913.6" cy="832" r="4.2" fill="#4a84d6"/><circle cx="872.9" cy="546.7" r="4.2" fill="#f2601f"/><circle cx="900.5" cy="547.6" r="4.2" fill="#4a84d6"/><circle cx="915.9" cy="556.6" r="4.2" fill="#4cb448"/><circle cx="913.8" cy="557.1" r="4.2" fill="#b21f3c"/><circle cx="944.8" cy="552.6" r="4.2" fill="#4a84d6"/><circle cx="950.7" cy="541.4" r="4.2" fill="#4cb448"/><circle cx="959.5" cy="534.6" r="4.2" fill="#4a84d6"/><circle cx="965.4" cy="535.2" r="4.2" fill="#2e4f9c"/><circle cx="836.6" cy="592" r="4.2" fill="#e3211f"/><circle cx="844.1" cy="590.3" r="4.2" fill="#4cb448"/><circle cx="903.7" cy="593.3" r="4.2" fill="#b21f3c"/><circle cx="872.8" cy="609.7" r="4.2" fill="#4a84d6"/><circle cx="926" cy="610" r="4.2" fill="#f2601f"/><circle cx="812.5" cy="634.9" r="4.2" fill="#f2601f"/><circle cx="813.4" cy="643.8" r="4.2" fill="#fedb00"/><circle cx="836.4" cy="645.8" r="4.2" fill="#e3211f"/><circle cx="837.3" cy="641.9" r="4.2" fill="#e3211f"/><circle cx="844.7" cy="643.2" r="4.2" fill="#2e4f9c"/><circle cx="885.8" cy="635.5" r="4.2" fill="#4a84d6"/><circle cx="831.3" cy="662.4" r="4.2" fill="#4a84d6"/><circle cx="830.7" cy="668.7" r="4.2" fill="#e3211f"/><circle cx="834.7" cy="665.2" r="4.2" fill="#e3211f"/><circle cx="890.4" cy="665.6" r="4.2" fill="#f2601f"/><circle cx="900.9" cy="666.6" r="4.2" fill="#4a84d6"/><circle cx="886.2" cy="683.2" r="4.2" fill="#4a84d6"/><circle cx="901.3" cy="691.7" r="4.2" fill="#fedb00"/><circle cx="900.3" cy="687.3" r="4.2" fill="#fedb00"/><circle cx="903.2" cy="703" r="4.2" fill="#e3211f"/><circle cx="925.8" cy="699.4" r="4.2" fill="#e3211f"/><circle cx="825.8" cy="695.2" r="4.2" fill="#4a84d6"/><circle cx="833.8" cy="698.8" r="4.2" fill="#b21f3c"/><circle cx="829.8" cy="703.9" r="4.2" fill="#f2601f"/><circle cx="839" cy="705.1" r="4.2" fill="#f2601f"/><circle cx="844.7" cy="701.3" r="4.2" fill="#4a84d6"/><circle cx="1005" cy="465.5" r="4.2" fill="#4a84d6"/><circle cx="971.3" cy="503.7" r="4.2" fill="#e3211f"/><circle cx="1019.3" cy="551.2" r="4.2" fill="#f2601f"/><circle cx="1027" cy="606.7" r="4.2" fill="#4a84d6"/><circle cx="1101.8" cy="580.4" r="4.2" fill="#f2601f"/><circle cx="1113.9" cy="591.6" r="4.2" fill="#e3211f"/><circle cx="1057.3" cy="650" r="4.2" fill="#4a84d6"/><circle cx="1038.6" cy="658.7" r="4.2" fill="#b21f3c"/><circle cx="1149" cy="707" r="4.2" fill="#e3211f"/><circle cx="1185" cy="710" r="4.2" fill="#4a84d6"/><circle cx="1179" cy="608" r="4.2" fill="#2e4f9c"/><circle cx="1168" cy="621" r="4.2" fill="#b21f3c"/><circle cx="1230.7" cy="598.7" r="4.2" fill="#f2601f"/><circle cx="1341.3" cy="633.3" r="4.2" fill="#f2601f"/><circle cx="1216" cy="652" r="4.2" fill="#fedb00"/><circle cx="1236.8" cy="661.9" r="4.2" fill="#4a84d6"/><circle cx="1296" cy="667.2" r="4.2" fill="#b21f3c"/><circle cx="1249.3" cy="680.5" r="4.2" fill="#4a84d6"/><circle cx="1317.3" cy="734.7" r="4.2" fill="#4a84d6"/><circle cx="1336" cy="777.3" r="4.2" fill="#e3211f"/></g></g></svg>

<!-- card -->
<div class="a" style="left:213px;top:224px;width:1156px;height:238px;background:#fff;border-radius:5px;box-shadow:0 10px 22px rgba(0,0,0,0.07)"></div>
<div class="ic" style="left:293.5px;top:268.5px;width:45px;height:45px"></div>
<svg class="a" style="left:299px;top:274px" width="35" height="34" viewBox="0 0 35 34"><path d="M17 1L0.5 17H4.5V33H14V23.5H20V33H30V17H34Z" fill="#1b4586"/><path d="M24 3.5H31V11L24 4.5Z" fill="#1b4586"/><path d="M17 1L34 17" stroke="#ecedf3" stroke-width="0"/></svg>
<div class="ic" style="left:520px;top:257.5px;width:67px;height:67px"></div>
<svg class="a" style="left:531px;top:270px" width="45" height="41" viewBox="0 0 45 41"><path d="M30 1.5L18 13.5L26 21.5V27H40V14H44Z" fill="#1b4586"/><path d="M35 3.5H41V10L35 4.5Z" fill="#1b4586"/><path d="M15 15L1 27.5H5V40H11.5V33H18.5V40H25V27.5H29Z" fill="#1b4586"/><path d="M16.5 14L30.5 27" stroke="#ecedf3" stroke-width="2.2"/><path d="M15 15L29 27.5" stroke="#1b4586" stroke-width="0"/></svg>
<div class="ic" style="left:769px;top:268.5px;width:45px;height:45px"></div>
<div class="ic" style="left:1006px;top:268.5px;width:45px;height:45px"></div>
<div class="ic" style="left:1244px;top:268.5px;width:45px;height:45px"></div>
<svg class="a" style="left:776px;top:276px" width="32" height="32" viewBox="0 0 32 32"><rect x="2" y="1" width="19" height="3" rx="1" fill="#1b4586"/><path d="M2 6H20L21 15.5Q19.5 17 17.5 15.5Q16 17 14 15.5Q12.5 17 10.5 15.5Q9 17 7 15.5Q5 17 3 15.5L0.5 15.5Z" fill="#1b4586"/><path d="M5 8L3.5 14M9.5 8L8.5 14M14 8L13.5 14" stroke="#ecedf3" stroke-width="1.6"/><path d="M2 17.5H28V30H25V19.5H16V30H2ZM5 19.5V26.5H13V19.5Z" fill="#1b4586" fill-rule="evenodd"/><circle cx="26" cy="9" r="8.3" fill="#ecedf3"/><circle cx="26" cy="9" r="7.3" fill="#1f9d48"/><path d="M22.5 9.2L25 11.7L29.5 6.5" stroke="#fff" stroke-width="1.8" fill="none"/></svg><svg class="a" style="left:1013.5px;top:276px" width="32" height="32" viewBox="0 0 32 32"><rect x="2" y="1" width="19" height="3" rx="1" fill="#1b4586"/><path d="M2 6H20L21 15.5Q19.5 17 17.5 15.5Q16 17 14 15.5Q12.5 17 10.5 15.5Q9 17 7 15.5Q5 17 3 15.5L0.5 15.5Z" fill="#1b4586"/><path d="M5 8L3.5 14M9.5 8L8.5 14M14 8L13.5 14" stroke="#ecedf3" stroke-width="1.6"/><path d="M2 17.5H28V30H25V19.5H16V30H2ZM5 19.5V26.5H13V19.5Z" fill="#1b4586" fill-rule="evenodd"/><circle cx="26" cy="9" r="8.3" fill="#ecedf3"/><circle cx="26" cy="9" r="7.3" fill="#2ea3e8"/><path d="M22 8Q26 4.5 30 8M23.5 9.8Q26 7.6 28.5 9.8" stroke="#fff" stroke-width="1.1" fill="none"/><circle cx="26" cy="11.7" r="1" fill="#fff"/></svg><svg class="a" style="left:1251.5px;top:276px" width="32" height="32" viewBox="0 0 32 32"><rect x="2" y="1" width="19" height="3" rx="1" fill="#1b4586"/><path d="M2 6H20L21 15.5Q19.5 17 17.5 15.5Q16 17 14 15.5Q12.5 17 10.5 15.5Q9 17 7 15.5Q5 17 3 15.5L0.5 15.5Z" fill="#1b4586"/><path d="M5 8L3.5 14M9.5 8L8.5 14M14 8L13.5 14" stroke="#ecedf3" stroke-width="1.6"/><path d="M2 17.5H28V30H25V19.5H16V30H2ZM5 19.5V26.5H13V19.5Z" fill="#1b4586" fill-rule="evenodd"/><circle cx="26" cy="9" r="8.3" fill="#ecedf3"/><circle cx="26" cy="9" r="7.3" fill="#e53935"/><circle cx="26" cy="9" r="3.5" stroke="#fff" stroke-width="1.2" fill="none"/><path d="M24 12L28 6" stroke="#fff" stroke-width="1"/></svg>
<div class="lab" style="left:196px">RB Aktif Beroperasi</div>
<div class="lab" style="left:433px">RB Relokasi</div>
<div class="lab" style="left:671px">Go Modern</div>
<div class="lab" style="left:908px">Go Digital</div>
<div class="lab" style="left:1146px">Go Online</div>
<div class="num" style="left:186px">250</div>
<div class="num" style="left:423px">0</div>
<div class="num" style="left:661px">661,280</div>
<div class="num" style="left:898px">112,936</div>
<div class="num" style="left:1136px">30,132</div>

<!-- zoom buttons -->
<div class="a" style="left:11px;top:433px;width:16px;height:16px;border-radius:3px;background:#1787a0"></div>
<svg class="a" style="left:11px;top:433px" width="16" height="16" viewBox="0 0 16 16"><path d="M8 3.5V12.5M3.5 8H12.5" stroke="#fff" stroke-width="1.8"/></svg>
<div class="a" style="left:11px;top:454px;width:16px;height:16px;border-radius:3px;background:#1787a0"></div>
<svg class="a" style="left:11px;top:454px" width="16" height="16" viewBox="0 0 16 16"><path d="M3.5 8H12.5" stroke="#fff" stroke-width="1.8"/></svg>

<!-- bottom faint card -->
<div class="a" style="left:213px;top:832px;width:1156px;height:18px;background:#fff;border-radius:6px 6px 0 0;box-shadow:0 -3px 8px rgba(0,0,0,0.025)"></div>

<!-- scrollbar -->
<div class="a" style="left:1582px;top:107px;width:18px;height:743px;background:#f1f1f1"></div>
<svg class="a" style="left:1586px;top:113px" width="10" height="6" viewBox="0 0 10 6"><path d="M1 5.5L5 1L9 5.5Z" fill="#505050"/></svg>
<div class="a" style="left:1584px;top:339px;width:14px;height:115px;background:#c1c1c1"></div>
<svg class="a" style="left:1586px;top:838px" width="10" height="6" viewBox="0 0 10 6"><path d="M1 0.5L5 5L9 0.5Z" fill="#505050"/></svg>

<!-- taskbar -->
<div class="a" style="left:0;top:850px;width:1600px;height:50px;background:#eeeeee;border-top:1px solid #c9c9c9"></div>
<svg class="a" style="left:21px;top:862px" width="26" height="24" viewBox="0 0 26 24"><defs><linearGradient id="sun" x1="0" y1="0" x2="1" y2="1"><stop offset="0" stop-color="#f8b41c"/><stop offset="1" stop-color="#ee6a0c"/></linearGradient><linearGradient id="cld" x1="0" y1="0" x2="0" y2="1"><stop offset="0" stop-color="#d9ecff"/><stop offset="1" stop-color="#8fbcef"/></linearGradient></defs><circle cx="12" cy="12" r="10.5" fill="url(#sun)"/><path d="M11 18.5Q9 18.5 9 16.5Q9 14.5 11.5 14.5Q12.5 11.5 16 11.5Q19.5 11.5 20 14.5Q23.5 14.5 23.5 16.8Q23.5 18.5 21.5 18.5Z" fill="url(#cld)"/></svg>
<div class="a" style="left:54px;top:860px;font-size:12.5px;line-height:14px;color:#1b1b1b">30°C</div>
<div class="a" style="left:54px;top:876px;font-size:12.5px;line-height:14px;color:#5b5b5b">Cerah</div>
<svg class="a" style="left:442px;top:863px" width="24" height="24" viewBox="0 0 24 24"><defs><linearGradient id="win" x1="0" y1="0" x2="1" y2="1"><stop offset="0" stop-color="#35b6f5"/><stop offset="1" stop-color="#0a6ad6"/></linearGradient></defs><path d="M0 0H11.2V11.2H0ZM12.8 0H24V11.2H12.8ZM0 12.8H11.2V24H0ZM12.8 12.8H24V24H12.8Z" fill="url(#win)"/></svg>
<div class="a" style="left:481px;top:858px;width:226px;height:33px;border-radius:17px;background:#fafafa;border:1px solid #dadada;overflow:hidden"><svg style="position:absolute;left:166px;top:5px" width="59" height="27" viewBox="0 0 59 27"><path d="M0 27Q10 8 30 6Q48 5 59 7V27Z" fill="#7da83a"/><ellipse cx="30" cy="19" rx="16" ry="6" fill="#3aa0d8"/><ellipse cx="30" cy="18" rx="9" ry="4" fill="#7da83a"/><rect x="24" y="9" width="9" height="8" fill="#d89b5a"/><path d="M10 4Q14 1 20 3Q24 2 26 4Z" fill="#c9b9a8"/></svg></div>
<svg class="a" style="left:492px;top:868px" width="16" height="16" viewBox="0 0 16 16"><circle cx="6.5" cy="6.5" r="5.3" stroke="#1b1b1b" stroke-width="1.6" fill="none"/><path d="M10.3 10.3L15 15" stroke="#1b1b1b" stroke-width="1.8"/></svg>
<div class="a" style="left:518px;top:867px;font-size:14px;line-height:17px;color:#5a5a5a">Search</div>
<svg class="a" style="left:721px;top:863px" width="26" height="23" viewBox="0 0 26 23"><rect x="8" y="0" width="17" height="16" rx="1" fill="#e8e8e8" stroke="#d5d5d5"/><rect x="1" y="6" width="17" height="16" fill="#1b1b1b"/><rect x="8" y="6" width="10" height="10" fill="#9b9b9b"/></svg>
<svg class="a" style="left:766px;top:857px" width="33" height="30" viewBox="0 0 33 30"><defs><linearGradient id="tm" x1="0" y1="0" x2="1" y2="1"><stop offset="0" stop-color="#7b83eb"/><stop offset="1" stop-color="#5b3fc0"/></linearGradient></defs><path d="M14 7Q26 7 27 17Q27 27 15 28H3L6 24Q2 21 2 17Q3 7 14 7Z" fill="url(#tm)"/><rect x="8" y="13" width="10" height="9" rx="1.5" fill="#fff"/><path d="M18 16L22 14V21L18 19Z" fill="#fff"/><circle cx="24" cy="9" r="8" fill="#1a73d9"/><text x="21.2" y="13" font-size="11" fill="#fff" font-family="Liberation Sans">1</text></svg>
<svg class="a" style="left:813px;top:862px" width="25" height="25" viewBox="0 0 25 25"><circle cx="12.5" cy="12.5" r="12.5" fill="#1ed760"/><path d="M6 9Q13 6.5 19.5 10M6.8 13Q13 11 18.2 13.8M7.5 16.7Q12.5 15.2 17 17.5" stroke="#111" stroke-width="2" fill="none" stroke-linecap="round"/></svg>
<div class="a" style="left:822px;top:892px;width:7px;height:3px;border-radius:2px;background:#8a8a8a"></div>
<svg class="a" style="left:858px;top:864px" width="27" height="23" viewBox="0 0 27 23"><path d="M0 2Q0 0 2 0H9L11 3H25Q27 3 27 5V21Q27 23 25 23H2Q0 23 0 21Z" fill="#f5c02c"/><path d="M0 6H27V21Q27 23 25 23H2Q0 23 0 21Z" fill="#ffd54f"/><rect x="5" y="14" width="17" height="9" rx="2" fill="#1e88d6"/></svg>
<div class="a" style="left:868px;top:892px;width:7px;height:3px;border-radius:2px;background:#8a8a8a"></div>
<div class="a" style="left:897px;top:855px;width:40px;height:40px;border-radius:4px;background:#f7f7f7;border:1px solid #e3e3e3"></div>
<svg class="a" style="left:904px;top:855px" width="32" height="33" viewBox="0 0 32 33"><defs><clipPath id="cav"><circle cx="23.5" cy="11" r="8"/></clipPath></defs><circle cx="13.5" cy="19.5" r="12.5" fill="#db4437"/><path d="M13.5 19.5L2.7 13.3A12.5 12.5 0 0 0 13.5 32Z" fill="#0f9d58"/><path d="M13.5 19.5L13.5 32A12.5 12.5 0 0 0 24.3 13.3Z" fill="#f4b400"/><circle cx="13.5" cy="19.5" r="5.8" fill="#fff"/><circle cx="13.5" cy="19.5" r="4.5" fill="#4285f4"/><g clip-path="url(#cav)"><rect x="15" y="3" width="17" height="16" fill="#4f86c9"/><rect x="15" y="11" width="17" height="8" fill="#5d6650"/><rect x="24" y="6" width="3" height="8" fill="#3f4552"/></g><circle cx="23.5" cy="11" r="8" fill="none" stroke="#f7f7f7" stroke-width="0.8"/></svg>
<div class="a" style="left:909px;top:892px;width:16px;height:3px;border-radius:2px;background:#1a73e8"></div>
<svg class="a" style="left:950px;top:857px" width="32" height="31" viewBox="0 0 32 31"><circle cx="13" cy="18" r="12.5" fill="#5865f2"/><path d="M7 14Q9 12.5 11 12.5L11.5 13.5Q13 13.2 14.5 13.5L15 12.5Q17 12.5 19 14Q20.5 17.5 20 21.5Q18.5 22.8 16.5 23.2L15.7 22Q13 22.6 10.3 22L9.5 23.2Q7.5 22.8 6 21.5Q5.5 17.5 7 14Z" fill="#fff"/><circle cx="10.5" cy="18.5" r="1.4" fill="#5865f2"/><circle cx="15.5" cy="18.5" r="1.4" fill="#5865f2"/><circle cx="23" cy="8" r="7.8" fill="#e8434a"/><text x="16.5" y="12" font-size="10" fill="#fff" font-family="Liberation Sans">9+</text></svg>
<div class="a" style="left:960px;top:892px;width:7px;height:3px;border-radius:2px;background:#8a8a8a"></div>
<svg class="a" style="left:997px;top:862px" width="25" height="25" viewBox="0 0 25 25"><circle cx="12.5" cy="12.5" r="12.5" fill="#e5232f"/><path d="M6 8L18 7L19 17H7Z" fill="#fff"/><path d="M9 11V16M12 10.5V16M15 10.5V16" stroke="#e5232f" stroke-width="1.2"/></svg>
<div class="a" style="left:1006px;top:892px;width:7px;height:3px;border-radius:2px;background:#8a8a8a"></div>
<svg class="a" style="left:1043px;top:862px" width="25" height="25" viewBox="0 0 25 25"><defs><linearGradient id="st" x1="0" y1="0" x2="0" y2="1"><stop offset="0" stop-color="#0d1d3f"/><stop offset="1" stop-color="#1471b5"/></linearGradient></defs><circle cx="12.5" cy="12.5" r="12.5" fill="url(#st)"/><circle cx="16" cy="9" r="4" stroke="#fff" stroke-width="1.6" fill="none"/><path d="M1 13L9 16.5L13 11" stroke="#fff" stroke-width="2.2" fill="none"/><circle cx="8.5" cy="17" r="2.6" fill="#fff"/></svg>
<div class="a" style="left:1051px;top:892px;width:7px;height:3px;border-radius:2px;background:#8a8a8a"></div>
<svg class="a" style="left:1088px;top:863px" width="26" height="24" viewBox="0 0 26 24"><rect x="7" y="0" width="19" height="6" fill="#41a5ee"/><rect x="7" y="6" width="19" height="6" fill="#2b7cd3"/><rect x="7" y="12" width="19" height="6" fill="#185abd"/><rect x="7" y="18" width="19" height="6" fill="#103f91"/><rect x="0" y="5" width="14" height="14" rx="1" fill="#185abd"/><text x="1.5" y="16" font-size="11" font-weight="bold" fill="#fff" font-family="Liberation Sans">W</text></svg>
<div class="a" style="left:1097px;top:892px;width:7px;height:3px;border-radius:2px;background:#8a8a8a"></div>
<svg class="a" style="left:1134px;top:862px" width="25" height="25" viewBox="0 0 25 25"><path d="M10.5 0.5H14.5L15.3 3.6L18.2 4.8L21 3.2L23.8 6L22.2 8.8L23.4 11.7L24.5 12.5V14.5L21.4 15.3L20.2 18.2L21.8 21L19 23.8L16.2 22.2L13.3 23.4L12.5 24.5H10.5L9.7 21.4L6.8 20.2L4 21.8L1.2 19L2.8 16.2L1.6 13.3L0.5 12.5V10.5L3.6 9.7L4.8 6.8L3.2 4L6 1.2L8.8 2.8L11.7 1.6Z" fill="#6b7683"/><circle cx="12.5" cy="12.5" r="6" fill="#eeeeee"/><circle cx="12.5" cy="12.5" r="4.8" fill="#1f5fbf"/></svg>
<div class="a" style="left:1143px;top:892px;width:7px;height:3px;border-radius:2px;background:#8a8a8a"></div>
<svg class="a" style="left:1309px;top:870px" width="12" height="8" viewBox="0 0 12 8"><path d="M1 7L6 2L11 7" stroke="#1b1b1b" stroke-width="1.4" fill="none"/></svg>
<svg class="a" style="left:1340px;top:868px" width="17" height="12" viewBox="0 0 17 12"><path d="M4 11.3Q0.7 11.3 0.7 8.3Q0.7 5.5 3.8 5.3Q4.8 0.7 9.2 0.7Q13 0.7 13.8 4.5Q16.3 4.8 16.3 8Q16.3 11.3 13.3 11.3Z" stroke="#1b1b1b" stroke-width="1.2" fill="#bdbdbd"/></svg>
<svg class="a" style="left:1373px;top:867px" width="16" height="16" viewBox="0 0 16 16"><path d="M4 1L7.5 3.2L4 5.4L0.5 3.2ZM11.5 1L15 3.2L11.5 5.4L8 3.2ZM4 5.6L7.5 7.8L4 10L0.5 7.8ZM11.5 5.6L15 7.8L11.5 10L8 7.8Z" fill="#1b1b1b"/><rect x="0.5" y="8" width="7.5" height="7.5" fill="#e81123"/><text x="2" y="14.5" font-size="7" font-weight="bold" fill="#fff" font-family="Liberation Sans">4</text></svg>
<svg class="a" style="left:1406px;top:868px" width="17" height="13" viewBox="0 0 17 13"><path d="M1 5Q8.5 -1.5 16 5M3.5 7.5Q8.5 3 13.5 7.5M6 10Q8.5 8 11 10" stroke="#1b1b1b" stroke-width="1.3" fill="none"/><circle cx="8.5" cy="11.8" r="1.2" fill="#1b1b1b"/></svg>
<svg class="a" style="left:1431px;top:868px" width="18" height="13" viewBox="0 0 18 13"><path d="M1 4.5H4L8 1V12L4 8.5H1Z" stroke="#1b1b1b" stroke-width="1.1" fill="none"/><path d="M10.5 4Q12 6.5 10.5 9M12.8 2.5Q15 6.5 12.8 10.5M15 1Q18 6.5 15 12" stroke="#1b1b1b" stroke-width="1.1" fill="none"/></svg>
<svg class="a" style="left:1457px;top:869px" width="17" height="11" viewBox="0 0 17 11"><rect x="0.7" y="0.7" width="13.5" height="9.5" rx="2" stroke="#1b1b1b" stroke-width="1.2" fill="none"/><rect x="2.5" y="2.5" width="4" height="6" fill="#1b1b1b"/><rect x="14.5" y="3.5" width="2" height="4" fill="#1b1b1b"/></svg>
<div class="a" style="left:1490px;top:860px;width:65px;text-align:right;font-size:12.5px;line-height:14px;color:#1b1b1b">11:02</div>
<div class="a" style="left:1480px;top:876px;width:75px;text-align:right;font-size:12.5px;line-height:14px;color:#1b1b1b">09/07/2023</div>
<svg class="a" style="left:1564px;top:867px" width="15" height="16" viewBox="0 0 15 16"><path d="M2 12.5V7Q2 2.5 6.5 2.5Q9 2.5 10 4M11 7V12.5M0.7 12.5H12.5M5 14Q6.5 15.5 8 14" stroke="#1b1b1b" stroke-width="1.1" fill="none"/><path d="M8.5 4.5H11.5L8.5 8H11.5M11.5 0.8H14L11.5 3.5H14" stroke="#1b1b1b" stroke-width="1" fill="none"/></svg>

</body></html>
